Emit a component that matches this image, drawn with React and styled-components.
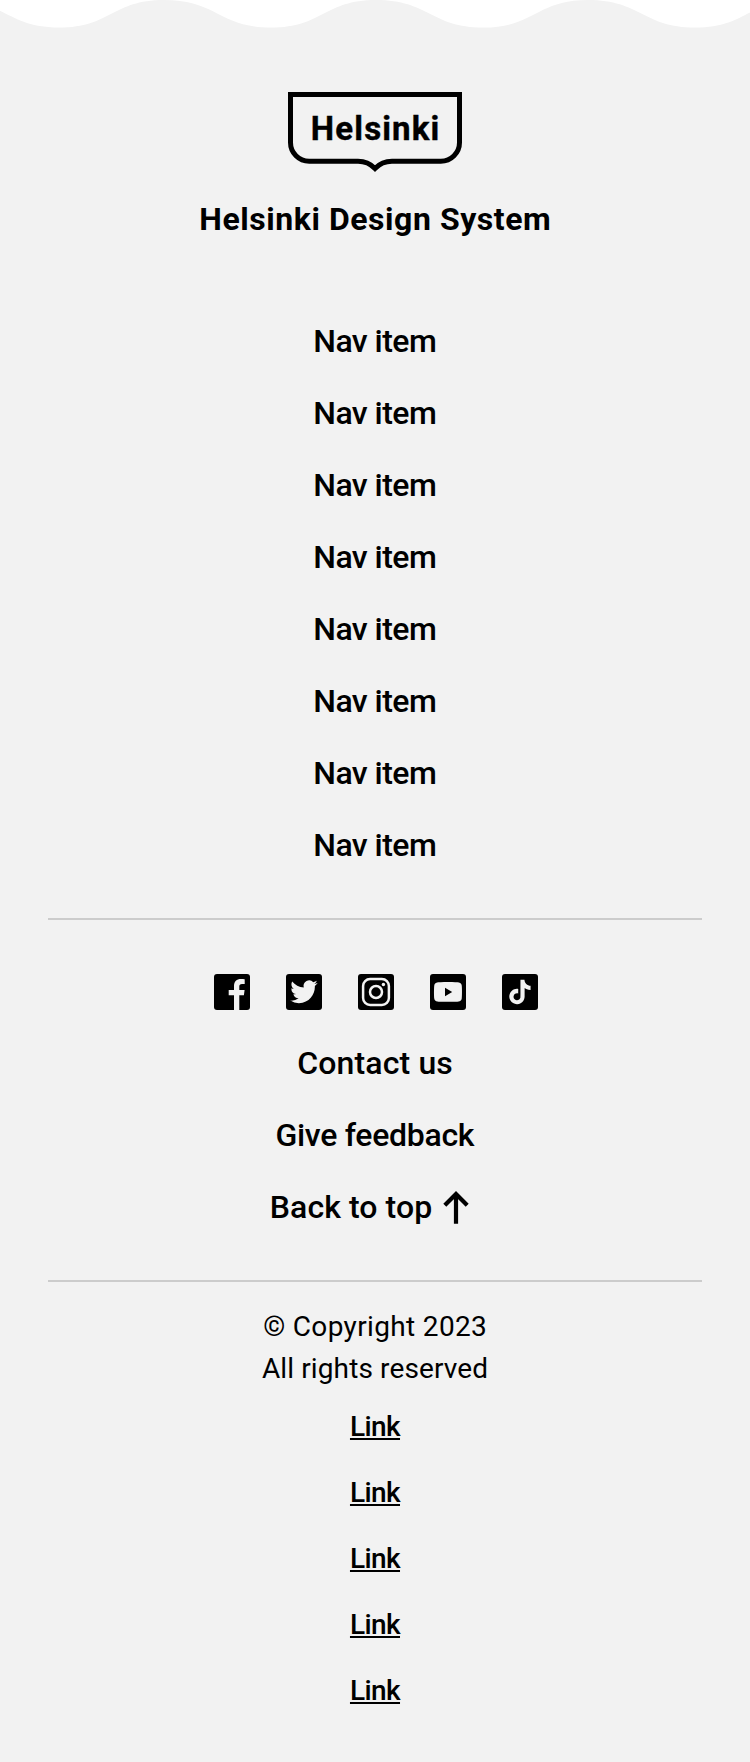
import React from 'react';
import styled, { createGlobalStyle } from 'styled-components';

const GlobalStyle = createGlobalStyle`
  body {
    margin: 0;
    background: #fff;
    color: #000;
    font-family: Roboto, 'Liberation Sans', sans-serif;
  }
  a { color: inherit; }
`;

const Footer = styled.footer`
  box-sizing: border-box;
  height: 1762px;
  overflow: hidden;
  background: #f2f2f2;
  display: flex;
  flex-direction: column;
  align-items: stretch;
`;

const Wave = styled.svg`
  display: block;
  flex: none;
  width: 100%;
  height: 28px;
`;

const Content = styled.div`
  padding: 64px 48px 0;
  display: flex;
  flex-direction: column;
`;

const Brand = styled.div`
  display: flex;
  flex-direction: column;
  align-items: center;
`;

const Logo = styled.svg`
  display: block;
  width: 174px;
  height: 80px;
  margin-bottom: 23px;
`;

const Label = styled.span`
  font-size: ${(p) => p.$size || 32}px;
  font-weight: ${(p) => p.$weight || 500};
  line-height: ${(p) => (p.$size === 28 ? 42 : 48)}px;
  letter-spacing: ${(p) => p.$spacing || 0}px;
  margin-right: ${(p) => -(p.$spacing || 0)}px;
  white-space: nowrap;
`;

const LinkList = styled.nav`
  display: flex;
  flex-direction: column;
  align-items: center;
  gap: 24px;
  margin-top: ${(p) => p.$top}px;
`;

const NavLink = styled.a`
  display: flex;
  align-items: center;
  text-decoration: none;
`;

const Divider = styled.hr`
  width: 100%;
  height: 2px;
  margin: ${(p) => p.$top}px 0 0;
  border: 0;
  background: #ccc;
`;

const Social = styled.div`
  display: flex;
  justify-content: center;
  gap: 36px;
  margin: 54px 0 0 2px;
`;

const SocialIcon = styled.svg`
  display: block;
  width: 36px;
  height: 36px;
`;

const Arrow = styled.svg`
  width: 26px;
  height: 34px;
  margin: 0 11px;
`;

const Legal = styled.div`
  display: flex;
  flex-direction: column;
  align-items: center;
  margin-top: 24px;
`;

const LegalLink = styled.a`
  font-size: 28px;
  font-weight: 500;
  line-height: 42px;
  letter-spacing: -0.6px;
  text-decoration: underline;
  text-decoration-thickness: 2px;
  text-underline-offset: 2px;
  text-decoration-skip-ink: none;
`;

const Tile = ({ label, children }) => (
  <SocialIcon viewBox="0 0 36 36" role="img" aria-label={label}>
    <rect width="36" height="36" rx="3" />
    {children}
  </SocialIcon>
);

const LIGHT = '#f2f2f2';
const waves = [-48, 164, 376, 588];

export default function App() {
  return (
    <>
      <GlobalStyle />
      <Footer>
        <Wave viewBox="0 0 750 28" preserveAspectRatio="none">
          {waves.map((x) => (
            <path
              key={x}
              fill="#fff"
              transform={`translate(${x} 0) scale(10.6)`}
              d="M20 0c-4.9 0-5 2.6-9.9 2.6S5 0 0 0z"
            />
          ))}
        </Wave>
        <Content>
          <Brand>
            <Logo viewBox="0 0 174 80" role="img" aria-label="Helsinki">
              <path
                fill="none"
                stroke="#000"
                strokeWidth="5"
                d="M2.5 2.5H171.5V50.5A18.7 18.7 0 0 1 152.8 69.2H104C97 69.2 91.500 71.800 87 76.400C82.500 71.800 77 69.200 70 69.200H21.200A18.700 18.700 0 0 1 2.500 50.500Z"
              />
              <text
                x="22.8"
                y="47.5"
                fontSize="33"
                fontWeight="700"
                stroke="#000"
                strokeWidth="0.4"
                textLength="128.5"
                lengthAdjust="spacing"
              >
                Helsinki
              </text>
            </Logo>
            <Label $weight={700} $spacing={0.55}>Helsinki Design System</Label>
          </Brand>

          <LinkList $top={74}>
            {Array.from({ length: 8 }, (_, i) => (
              <NavLink key={i} href="#"><Label $spacing={-0.55}>Nav item</Label></NavLink>
            ))}
          </LinkList>

          <Divider $top={49} />

          <Social>
            <Tile label="Facebook">
              <path fill={LIGHT} d="M20 36V21.300H14.700V16H20V12.200C20 7.500 22.700 5 26.800 5C28.500 5 30 5.100 30.700 5.200V10H28C26 10 25.300 11 25.300 12.500V16H30.600L29.900 21.300H25.300V36Z" />
            </Tile>
            <Tile label="Twitter">
              <path
                fill={LIGHT}
                transform="translate(4.300 3.700) scale(1.140 1.170)"
                d="M23.953 4.57a10 10 0 01-2.825.775 4.958 4.958 0 002.163-2.723c-.951.555-2.005.959-3.127 1.184a4.92 4.92 0 00-8.384 4.482C7.69 8.095 4.067 6.13 1.64 3.162a4.822 4.822 0 00-.666 2.475c0 1.71.87 3.213 2.188 4.096a4.904 4.904 0 01-2.228-.616v.06a4.923 4.923 0 003.946 4.827 4.996 4.996 0 01-2.212.085 4.936 4.936 0 004.604 3.417 9.867 9.867 0 01-6.102 2.105c-.39 0-.779-.023-1.17-.067a13.995 13.995 0 007.557 2.209c9.053 0 13.998-7.496 13.998-13.985 0-.21 0-.42-.015-.63A9.935 9.935 0 0024 4.59z"
              />
            </Tile>
            <Tile label="Instagram">
              <rect x="5.100" y="5.100" width="25.800" height="25.800" rx="7" fill="none" stroke={LIGHT} strokeWidth="2.500" />
              <circle cx="18" cy="18" r="6" fill="none" stroke={LIGHT} strokeWidth="2.500" />
              <circle cx="25.400" cy="10.500" r="1.700" fill={LIGHT} />
            </Tile>
            <Tile label="YouTube">
              <path fill={LIGHT} d="M18 8C24 8 27.500 8.200 29 8.500C30.600 8.900 31.400 9.900 31.700 11.200C32.100 13.500 32.100 22.500 31.700 24.800C31.400 26.100 30.600 27.100 29 27.400C26.500 27.900 9.500 27.900 7 27.400C5.400 27.100 4.600 26.100 4.300 24.800C3.900 22.500 3.900 13.500 4.300 11.200C4.600 9.900 5.400 8.900 7 8.500C8.500 8.200 12 8 18 8Z" />
              <path d="M15 13.700L22.200 18L15 22.300Z" />
            </Tile>
            <Tile label="TikTok">
              <path
                fill={LIGHT}
                transform="translate(5.700 5.700) scale(1.020)"
                d="M12.525.02c1.31-.02 2.61-.01 3.91-.02.08 1.53.63 3.09 1.75 4.17 1.12 1.11 2.7 1.62 4.24 1.79v4.03c-1.44-.05-2.89-.35-4.2-.97-.57-.26-1.1-.59-1.62-.93-.01 2.92.01 5.84-.02 8.75-.08 1.4-.54 2.79-1.35 3.94-1.31 1.92-3.58 3.17-5.91 3.21-1.43.08-2.86-.31-4.08-1.03-2.02-1.19-3.44-3.37-3.65-5.71-.02-.5-.03-1-.01-1.49.18-1.9 1.12-3.72 2.58-4.96 1.66-1.44 3.98-2.13 6.15-1.72.02 1.48-.04 2.96-.04 4.44-.99-.32-2.15-.23-3.02.37-.63.41-1.11 1.04-1.36 1.75-.21.51-.15 1.07-.14 1.61.24 1.64 1.82 3.02 3.5 2.87 1.12-.01 2.19-.66 2.77-1.61.19-.33.4-.67.41-1.06.1-1.79.06-3.57.07-5.36.01-4.03-.01-8.05.02-12.07z"
              />
            </Tile>
          </Social>

          <LinkList $top={29}>
            <NavLink href="#"><Label $spacing={0.15}>Contact us</Label></NavLink>
            <NavLink href="#"><Label $spacing={-0.3}>Give feedback</Label></NavLink>
            <NavLink href="#">
              <Label $spacing={0.08}>Back to top</Label>
              <Arrow viewBox="0 0 26 34">
                <path fill="none" stroke="#000" strokeWidth="4.200" d="M13 33.700V5M1.800 15.200L13 4L24.200 15.200" />
              </Arrow>
            </NavLink>
          </LinkList>

          <Divider $top={49} />

          <Legal>
            <Label $size={28} $weight={400} $spacing={0.35}>© Copyright 2023</Label>
            <Label $size={28} $weight={400} $spacing={0.12}>All rights reserved</Label>
          </Legal>
          <LinkList $top={16}>
            {Array.from({ length: 5 }, (_, i) => (
              <LegalLink key={i} href="#">Link</LegalLink>
            ))}
          </LinkList>
        </Content>
      </Footer>
    </>
  );
}
